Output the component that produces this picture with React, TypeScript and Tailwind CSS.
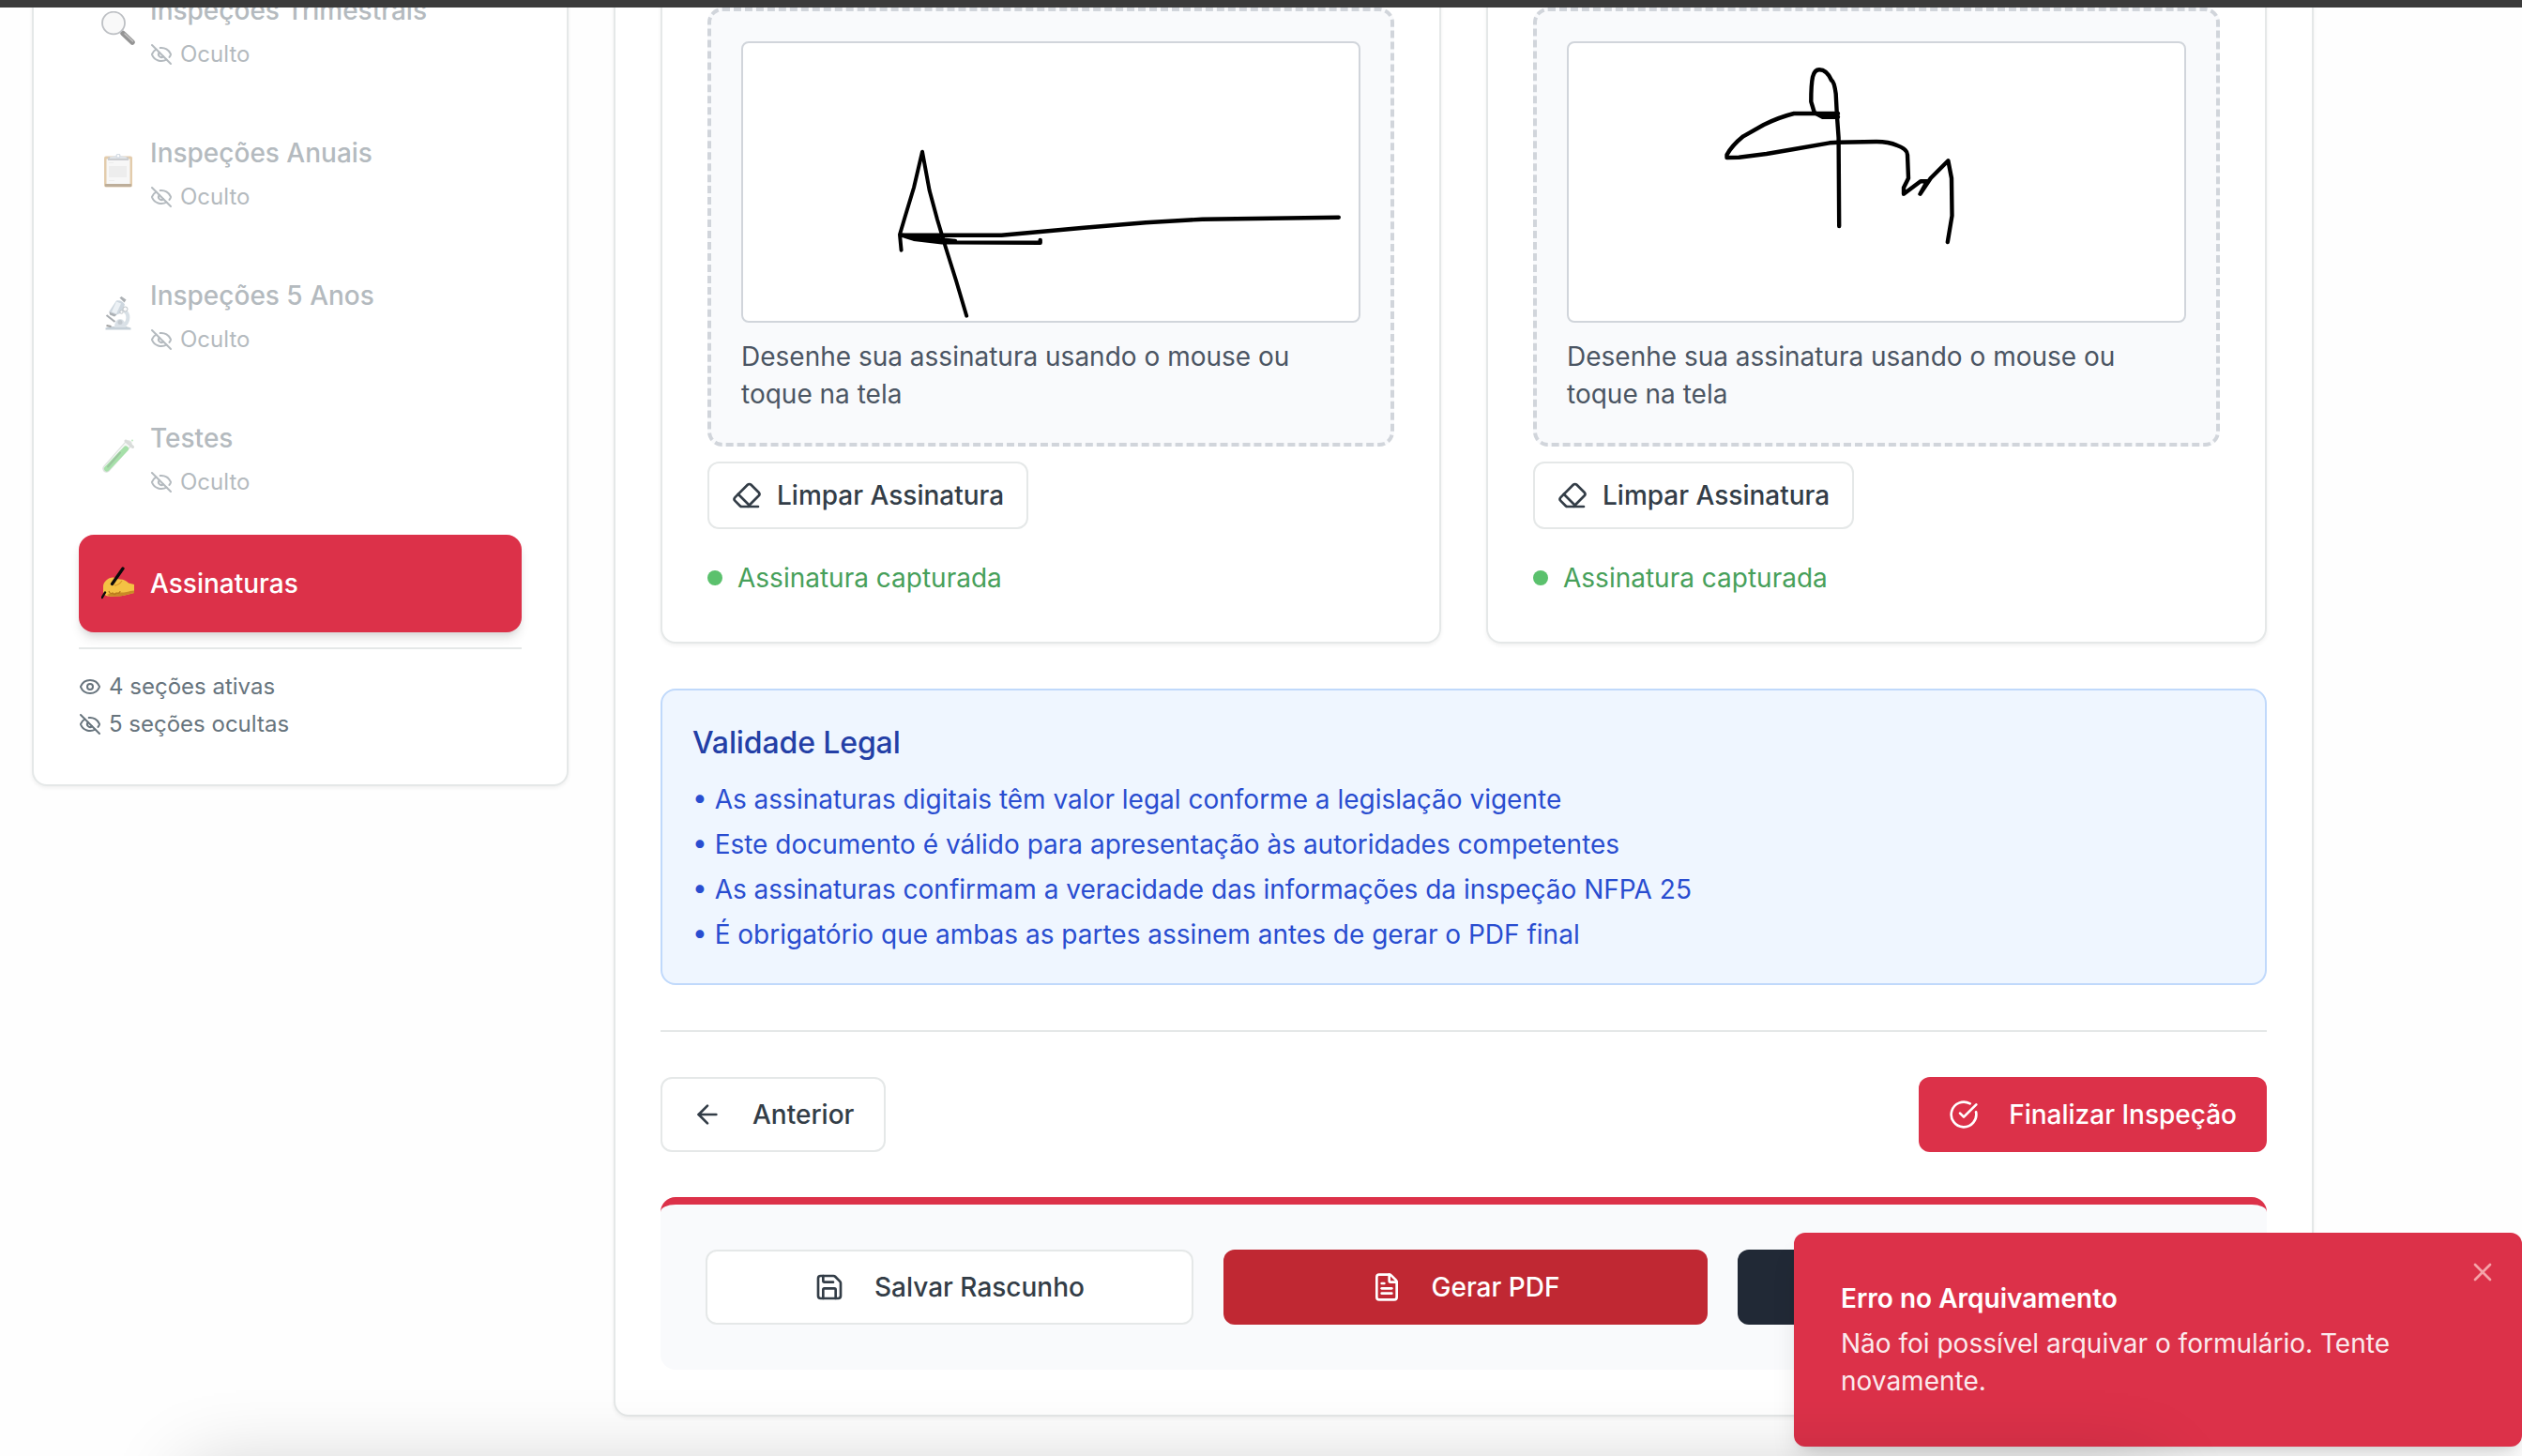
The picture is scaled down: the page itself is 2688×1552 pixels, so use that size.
import React from "react";
import { ArrowLeft, CircleCheckBig, Eraser, Eye, EyeOff, FileText, Save, X } from "lucide-react";

const Magnifier = () => (
  <svg viewBox="0 0 36 36" className="size-9 shrink-0">
    <path d="M23 23.500 L33 33" stroke="#2b2b2b" strokeWidth="5.500" strokeLinecap="round" />
    <path d="M25 24 L33.500 32" stroke="#8a8a8a" strokeWidth="1.500" strokeLinecap="round" />
    <ellipse cx="13" cy="12.500" rx="12" ry="11.800" fill="#f4f4f4" stroke="#7d828a" strokeWidth="1.800" />
  </svg>
);

const Clipboard = () => (
  <svg viewBox="0 0 36 36" className="size-9 shrink-0">
    <rect x="3" y="2.5" width="30" height="33" rx="2" fill="#c99a5c" />
    <rect x="4" y="32" width="28" height="3" fill="#7d5f38" />
    <rect x="5.5" y="5.500" width="25" height="26.500" fill="#f1f1f1" />
    <rect x="8" y="13" width="19" height="12" fill="#dcdcdc" />
    <rect x="8" y="9" width="5" height="1" fill="#dcdcdc" />
    <rect x="8" y="28" width="6" height="1" fill="#dcdcdc" />
    <path d="M7 3.500h22v3.500H7z" fill="#989ca3" />
    <path d="M9 3.500l5-1.500h8l5 1.500v1.500H9z" fill="#c3cad3" />
    <circle cx="18" cy="2.200" r="1.900" fill="#fff" stroke="#aebccc" strokeWidth="1.300" />
  </svg>
);

const Microscope = () => (
  <svg viewBox="0 0 36 36" className="size-9 shrink-0">
    <path d="M24 15c6 3 6 12-1 17" fill="none" stroke="#b3c2cf" strokeWidth="4" />
    <path d="M4.500 35.500v-2l5-1.500h17l5 1.500v2z" fill="#8fa3b3" />
    <path d="M14 33c0-6 3-9 6-9s6 3 6 9z" fill="#b7c5d1" />
    <circle cx="20" cy="27.500" r="2.500" fill="#8896a2" />
    <path d="M5.500 20l9 7" stroke="#555e66" strokeWidth="2.200" />
    <path d="M16 4.500c4-1 7 1 9 4l-3 9-6 2-8-3z" fill="#9eb1c1" />
    <path d="M16 5.500l5 2-5 11-5-2z" fill="#dbe5ed" />
    <path d="M8.500 16.500l8 3-2.500 2-5-2z" fill="#59636c" />
    <path d="M19.500 1.500l2-1.500 5 3.500-2 3z" fill="#5b646c" />
    <circle cx="25.500" cy="13.500" r="2.500" fill="#f4f7f9" stroke="#7c8790" />
    <circle cx="21.500" cy="16.500" r="1.700" fill="#f4f7f9" stroke="#7c8790" />
    <path d="M5.500 31l5 1" stroke="#444" strokeWidth="2" />
  </svg>
);

const TestTube = () => (
  <svg viewBox="0 0 36 36" className="size-9 shrink-0">
    <path d="M28.500 5.500 L5.500 31.500" stroke="#bcc6bf" strokeWidth="8.500" strokeLinecap="round" />
    <path d="M27.500 6.500 L6 31" stroke="#eef4ef" strokeWidth="6" strokeLinecap="round" />
    <path d="M26 10.500 L6 31.500" stroke="#4fc255" strokeWidth="6" strokeLinecap="round" />
    <path d="M20 14.500 L7 29.500" stroke="#3a8f40" strokeWidth="2" strokeLinecap="round" />
    <path d="M26 2l7.500 6.500" stroke="#b5bab6" strokeWidth="3" strokeLinecap="round" />
    <circle cx="33" cy="1.500" r="1" fill="#7fd884" />
  </svg>
);

const WritingHand = () => (
  <svg viewBox="0 0 36 36" className="size-9 shrink-0">
    <path d="M2 21c0-5 6-10 11-9.500 3 .5 4 2 7 2 4 0 7 2 9 4l6 1.500v9c-3 1-5 1-8 2-4 1.500-8 1.500-11 1.500-6 1-14 .5-14-5z" fill="#f4c244" />
    <path d="M6 30c3-2 6-1 9-2 5-1 8 0 12-1 3-.5 5-1.500 8-1.500v2.500c-3 1-5 1-8 2-4 1.500-8 1.500-11 1.500-4 .5-7 .5-10-1.500z" fill="#c98a26" />
    <path d="M8 26c1 3 3 3 4 2 1 2 3 2 4 0 2 1 4 0 4-2" stroke="#b97b1e" strokeWidth="1.300" fill="none" />
    <path d="M14 20c3 0 6-2 8-5" stroke="#d99a2b" strokeWidth="1.300" fill="none" />
    <path d="M23 2 11.500 18.500" stroke="#0b0b0b" strokeWidth="3.300" strokeLinecap="round" />
    <path d="M4 27.500 0.800 33" stroke="#0b0b0b" strokeWidth="2.400" strokeLinecap="round" />
  </svg>
);

function HiddenItem({ icon, title }: { icon: React.ReactNode; title: string }) {
  return (
    <div className="flex h-[104px] items-center gap-4 px-6 opacity-50">
      {icon}
      <div className="pt-2">
        <div className="text-[28px] font-medium leading-10 text-[#6b7780]">{title}</div>
        <div className="mt-[7px] flex items-center gap-2 text-2xl leading-10 text-[#6b7780]">
          <EyeOff className="size-6" />
          Oculto
        </div>
      </div>
    </div>
  );
}

function SignatureCard({ children }: { children: React.ReactNode }) {
  return (
    <div className="flex h-[728px] w-[832px] flex-col items-start rounded-2xl border-2 border-[#e5e8e8] bg-white p-12 shadow-[0_2px_4px_rgba(0,0,0,0.06)]">
      <div className="w-full rounded-2xl border-4 border-dashed border-[#d1d5db] bg-[#f9fafc] p-8">
        <svg viewBox="0 0 656 296" className="block h-[300px] w-full rounded-lg border-2 border-[#d1d5db] bg-white" fill="none" stroke="#000" strokeWidth="4.400" strokeLinecap="round" strokeLinejoin="round">
          {children}
        </svg>
        <p className="mt-4 text-[28px] leading-10 text-[#4b5563]">
          Desenhe sua assinatura usando o mouse ou toque na tela
        </p>
      </div>
      <button className="mt-4 flex h-[72px] items-center gap-4 rounded-xl border-2 border-[#e5e8e8] bg-white px-6 text-[28px] font-medium leading-10 text-[#333d47]">
        <Eraser className="size-8" />
        Limpar Assinatura
      </button>
      <div className="mt-8 flex items-center gap-4 text-[28px] leading-10 text-[#47a05a]">
        <span className="size-4 rounded-full bg-[#5bc16d]" />
        Assinatura capturada
      </div>
    </div>
  );
}

const rules = [
  "• As assinaturas digitais têm valor legal conforme a legislação vigente",
  "• Este documento é válido para apresentação às autoridades competentes",
  "• As assinaturas confirmam a veracidade das informações da inspeção NFPA 25",
  "• É obrigatório que ambas as partes assinem antes de gerar o PDF final",
];

export default function App() {
  return (
    <div className="relative h-[1552px] w-[2688px] overflow-hidden bg-[#fefefe] font-['Inter',sans-serif] text-[#333d47]">
      <div className="relative z-10 h-2 bg-[#3b3b3b]" />
      <div className="-mt-13 flex items-start gap-12 pl-[34px]">
        <aside className="w-[572px] rounded-2xl border-2 border-[#e5e8e8] bg-white px-12 pb-11 shadow-[0_2px_4px_rgba(0,0,0,0.06)]">
          <nav className="flex flex-col gap-12 pt-5">
            <HiddenItem icon={<Magnifier />} title="Inspeções Trimestrais" />
            <HiddenItem icon={<Clipboard />} title="Inspeções Anuais" />
            <HiddenItem icon={<Microscope />} title="Inspeções 5 Anos" />
            <HiddenItem icon={<TestTube />} title="Testes" />
          </nav>
          <div className="mt-8 flex h-[104px] items-center gap-4 rounded-2xl bg-[#dc3149] px-6 text-[28px] font-medium text-white shadow-[0_8px_12px_-2px_rgba(0,0,0,0.12),0_4px_8px_-4px_rgba(0,0,0,0.1)]">
            <WritingHand />
            Assinaturas
          </div>
          <div className="mt-4 border-t-2 border-[#e5e8e8] pt-5 text-2xl leading-10 text-[#67747d]">
            <div className="flex items-center gap-2"><Eye className="size-6" />4 seções ativas</div>
            <div className="flex items-center gap-2"><EyeOff className="size-6" />5 seções ocultas</div>
          </div>
        </aside>

        <main className="w-[1812px] rounded-2xl border-2 border-[#e5e8e8] bg-white px-12 pb-12 shadow-[0_2px_4px_rgba(0,0,0,0.06)]">
          <div className="flex gap-12">
            <SignatureCard>
              <path d="M168.600 220.700L167 204l5.400-18.300L182 154l4.700-20L191 115.700l7.700 41.600L207 188l9 30L227 253l11.200 37.700" strokeWidth="4" />
              <path d="M168.600 204.700H275.500L363.300 196.700 429 191.300 489.500 187.700 634.800 185.700" />
              <path d="M170 205L226 211M170 205l12 3.700 30 3.600 104.700.4V210" />
            </SignatureCard>
            <SignatureCard>
              <path d="M288.200 195L287.600 100.700 285.900 77.300 284.700 54Q283 41 280 39.500 275 28.300 267 28.300 262 28.300 260 36 258.300 44 258.300 62.300L261.800 74 270.600 78.700H287" />
              <path d="M287 75H240Q224 79 207.800 87L186 99.300Q174 109 168.500 119V122L181.400 121.700 210.800 118 240 113 278 106.300 287 105.700 328 105Q341 105 350 109 361 113 361 119L362 144 357 154V160.700L375 147.300H382L374.500 160.700 385.700 144 404.400 125.300 408 144 408.500 184 403.800 212" />
            </SignatureCard>
          </div>

          <section className="mt-12 rounded-2xl border-2 border-[#c0d9fb] bg-[#eff6ff] p-8">
            <h4 className="text-[32px] font-medium leading-[48px] tracking-[-0.12px] text-[#233fa6]">Validade Legal</h4>
            <ul className="mt-4 flex flex-col gap-2 text-[28px] leading-10 text-[#294dd0]">
              {rules.map((r) => <li key={r}>{r}</li>)}
            </ul>
          </section>

          <div className="mt-12 flex justify-between border-t-2 border-[#e5e8e8] pt-12 text-[28px] font-medium">
            <button className="flex h-20 items-center gap-8 rounded-xl border-2 border-[#e5e8e8] bg-white px-8">
              <ArrowLeft className="size-8" />Anterior
            </button>
            <button className="flex h-20 items-center gap-8 rounded-xl bg-[#dc3149] px-8 text-white">
              <CircleCheckBig className="size-8" />Finalizar Inspeção
            </button>
          </div>

          <div className="mt-12 flex gap-8 rounded-2xl border-t-8 border-[#dc3149] bg-[#f9fafc] p-12 text-[28px] font-medium">
            <button className="flex h-20 flex-1 items-center justify-center gap-8 rounded-xl border-2 border-[#e5e8e8] bg-white px-8">
              <Save className="size-8" />Salvar Rascunho
            </button>
            <button className="flex h-20 flex-1 items-center justify-center gap-8 rounded-xl bg-[#c02833] px-8 text-white">
              <FileText className="size-8" />Gerar PDF
            </button>
            <button aria-label="Arquivar" className="h-20 flex-1 rounded-xl bg-[#212936] px-8" />
          </div>
        </main>
      </div>

      <div role="alert" className="absolute top-[1314px] right-0 h-[228px] w-[776px] rounded-xl border-2 border-[#dc3149] bg-[#dc3149] p-12 text-[28px] leading-10 text-white shadow-[0_20px_30px_-6px_rgba(0,0,0,0.12),0_8px_12px_-8px_rgba(0,0,0,0.12)]">
        <div className="font-semibold">Erro no Arquivamento</div>
        <div className="mt-2 opacity-90">Não foi possível arquivar o formulário. Tente novamente.</div>
        <X className="absolute top-6 right-6 size-8 text-[#f5a3a8]" />
      </div>
      <div className="pointer-events-none absolute top-[1566px] left-[200px] h-96 w-[2096px] shadow-[0_0_80px_0_rgba(0,0,0,0.2)]" />
    </div>
  );
}
